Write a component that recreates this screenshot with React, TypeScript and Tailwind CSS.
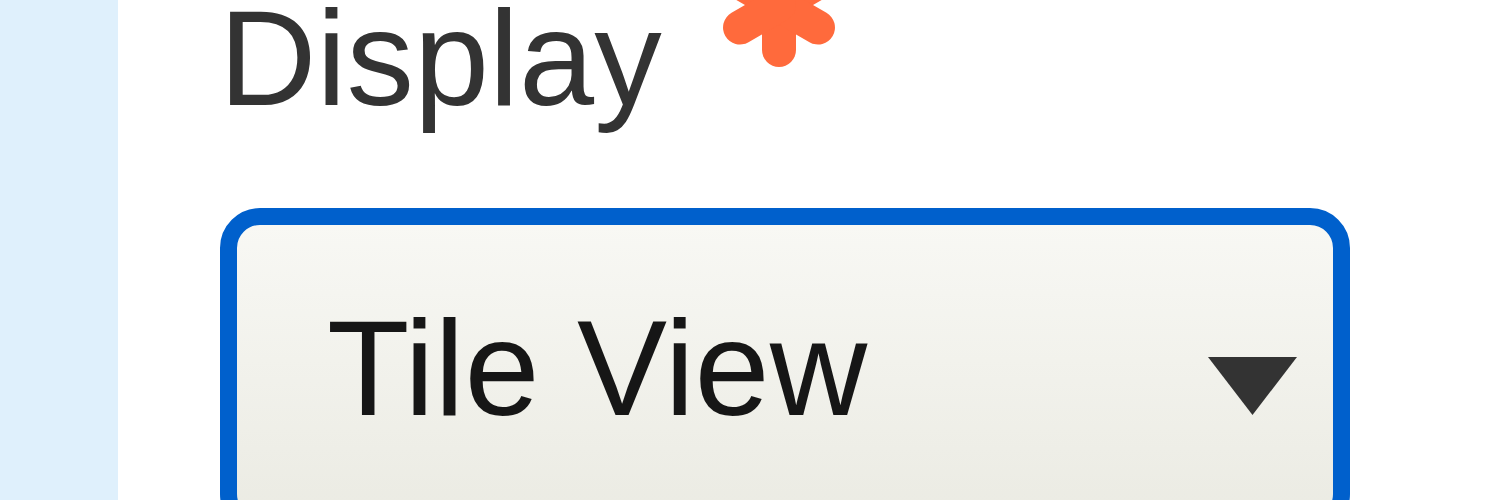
import React from "react";

function RequiredMark() {
  // six-armed asterisk, only the lower half shows in the frame
  const arms = [90, 210, 330, 270, 30, 150];
  return (
    <svg width="124" height="124" viewBox="0 0 124 124" className="shrink-0 ml-[55px] mt-[-48px]">
      {arms.map((a) => {
        const r = (a * Math.PI) / 180;
        return (
          <line
            key={a}
            x1="62"
            y1="62"
            x2={62 + 45 * Math.cos(r)}
            y2={62 + 45 * Math.sin(r)}
            stroke="#ff6a3c"
            strokeWidth="34"
            strokeLinecap="round"
          />
        );
      })}
    </svg>
  );
}

export default function App() {
  return (
    <div className="flex h-[500px] w-[1500px] overflow-hidden bg-white font-['Liberation_Sans',Arial,sans-serif]">
      <div className="w-[118px] shrink-0 bg-[#dff0fc]" />
      <div className="flex-1 pl-[102px]">
        <div className="mt-[-9px] ml-[-1px] flex items-start">
          <span className="text-[135px] leading-[135px] text-[#333]">Display</span>
          <RequiredMark />
        </div>
        <div className="mt-[82px] w-[1130px] rounded-[40px] border-[17px] border-[#0060cc] bg-gradient-to-b from-[#f8f8f4] to-[#ebebe3]">
          <div className="flex items-start justify-between pl-[90px] pr-[36px] pt-[76px] pb-[81px]">
            <span className="text-[135px] leading-[135px] text-[#161616]">Tile View</span>
            <svg width="89" height="58" viewBox="0 0 89 58" className="mt-[56px]">
              <polygon points="0,0 89,0 44.5,58" fill="#333" />
            </svg>
          </div>
        </div>
      </div>
    </div>
  );
}
